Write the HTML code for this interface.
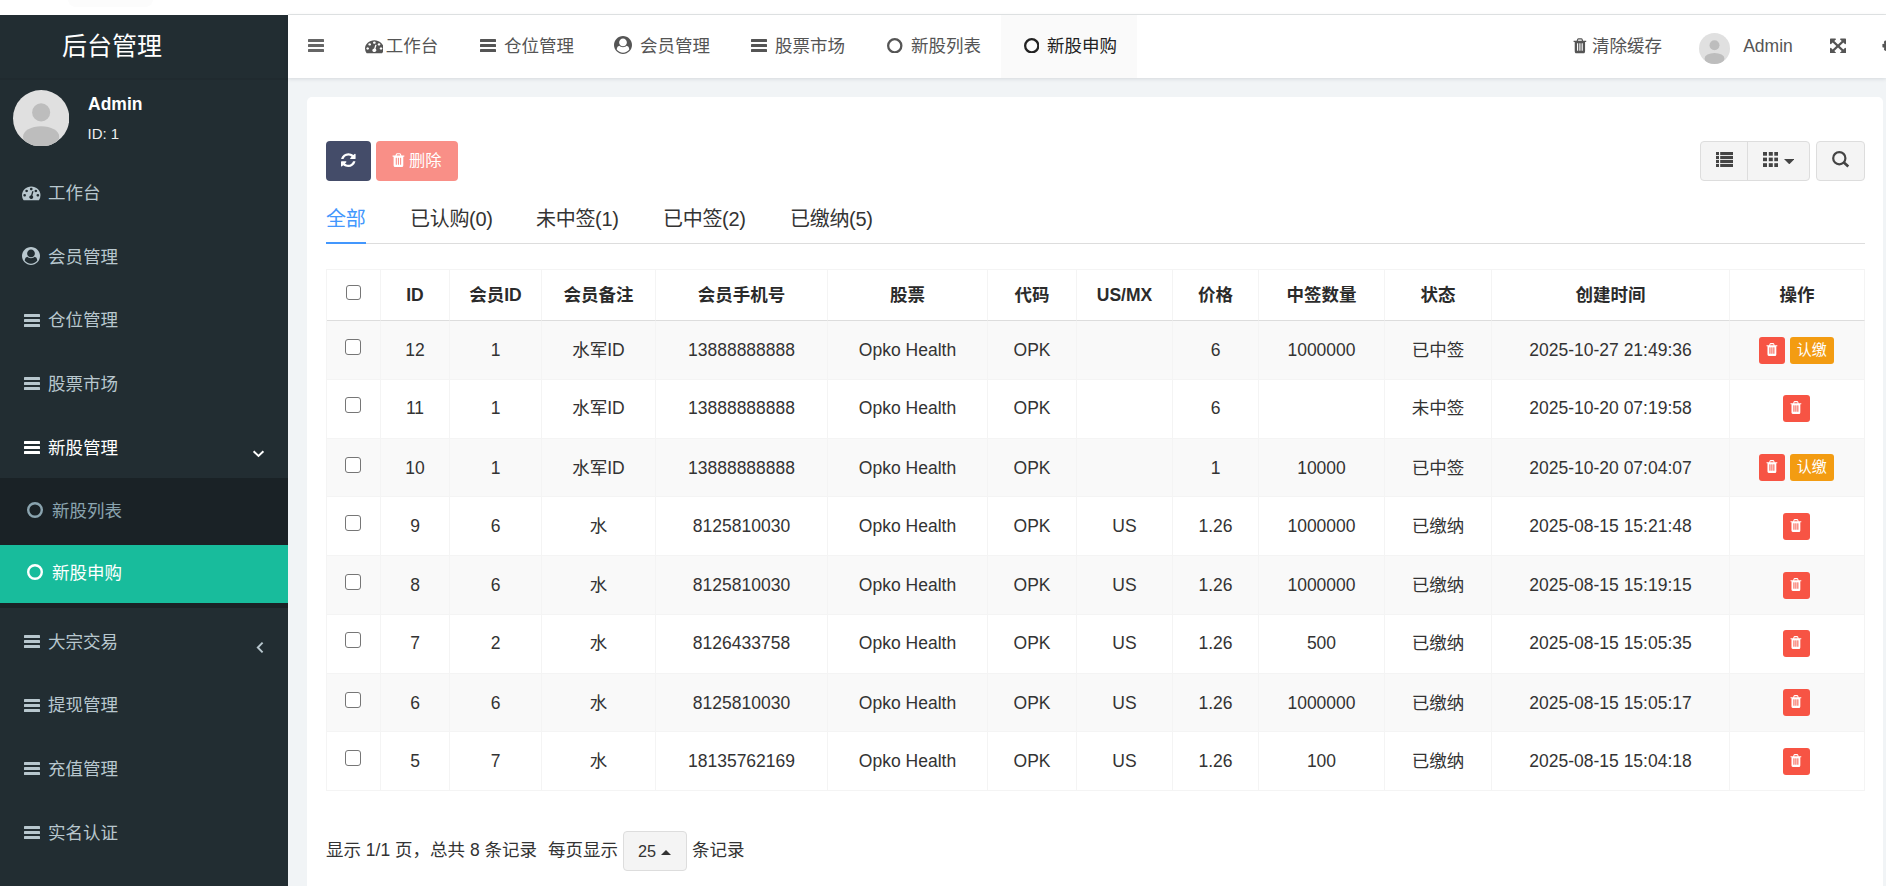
<!DOCTYPE html>
<html lang="zh-CN">
<head>
<meta charset="utf-8">
<title>后台管理</title>
<style>
*{box-sizing:border-box;margin:0;padding:0}
html,body{width:1886px;height:886px;overflow:hidden;background:#fff}
body{font-family:"Liberation Sans","Noto Sans CJK SC",sans-serif;font-size:17.5px;color:#333;position:relative}
.abs{position:absolute}
svg{display:block}
/* top strip */
#topline{position:absolute;left:288px;top:14px;width:1598px;height:1px;background:#e4e7e7}
/* sidebar */
#side{position:absolute;left:0;top:15px;width:288px;height:871px;background:#222d32;color:#b8c7ce}
#logo{position:absolute;left:62px;top:0;height:63px;line-height:62px;font-size:25px;color:#fff;white-space:nowrap}
#uname{position:absolute;left:88px;top:79px;font-size:17.5px;font-weight:bold;color:#fff;line-height:20px}
#uid{position:absolute;left:87.5px;top:109.5px;font-size:15px;color:#eee;line-height:18px}
.mi{position:absolute;left:0;width:288px;height:63.75px;line-height:63.75px;font-size:17.5px;color:#b8c7ce;white-space:nowrap}
.mi .ic{position:absolute;left:22px;top:0}
.mi .tx{position:absolute;left:48px;top:1px}
.mi.on{color:#fff}
#sub{position:absolute;left:0;top:463px;width:288px;height:130px;background:#1a2226}
.si{position:absolute;left:0;width:288px;height:58px;line-height:58px;font-size:17.5px;color:#8aa4af;white-space:nowrap}
.si .tx{position:absolute;left:52px;top:1px}
.si.on .tx{top:-1px}
.si.on{background:#18bc9c;color:#fff}
/* header */
#head{position:absolute;left:288px;top:15px;width:1598px;height:63px;background:#fff;box-shadow:0 1px 4px rgba(0,21,41,.12)}
.nt{position:absolute;top:0;height:63px;line-height:62px;font-size:17.5px;color:#555;white-space:nowrap}
.nt.on{background:#fafafa;color:#222}
/* content */
#main{position:absolute;left:288px;top:78px;width:1598px;height:808px;background:#f1f4f6}
#card{position:absolute;left:19px;top:19px;width:1576px;height:800px;background:#fff;border-radius:5px 5px 0 0}
.btn{position:absolute;border-radius:4px;white-space:nowrap}
#tabs{position:absolute;left:19px;top:146px;width:1539px;height:1px;background:#ddd}
.tab{position:absolute;top:-39px;letter-spacing:-.3px;font-size:20px;line-height:30px;color:#333;white-space:nowrap}
.tab.on{color:#4397fd}
#tabline{position:absolute;left:0;top:-1px;width:40px;height:2px;background:#4397fd}
table{position:absolute;left:19px;top:172px;border-collapse:separate;border-spacing:0;table-layout:fixed;width:1539px;border-left:1px solid #f4f4f4;border-top:1px solid #f4f4f4}
td,th{border-right:1px solid #f4f4f4;border-bottom:1px solid #f4f4f4;text-align:center;vertical-align:middle;font-size:17.5px;line-height:20px;color:#333;white-space:nowrap;padding:0;overflow:hidden}
th{height:51px;font-weight:bold;border-bottom:1px solid #ddd;color:#2b2b2b}
td{height:59px}
tr.s td{height:58px}
tr.u td{padding-bottom:2px}
td:last-child{padding-right:1.5px}
tbody tr:nth-child(odd) td{background:#f9f9f9}
.cb{display:inline-block;width:16px;height:16px;border:1.3px solid #767676;border-radius:3px;background:#fff;vertical-align:middle;position:relative;top:-4px;left:-1px}
th .cb{width:15px;height:15px;top:-3.5px;left:-.5px}
.del{display:inline-block;width:26.5px;height:27px;border-radius:3px;background:#f75444;vertical-align:middle;position:relative}
.pay{display:inline-block;width:44px;height:27px;border-radius:3px;background:#f39c12;color:#fff;font-size:15px;line-height:26px;vertical-align:middle;margin-left:4.5px}
.pgb{display:inline-block;width:63.5px;height:39.5px;margin:0 5.5px 0 5px;border:1px solid #ddd;border-radius:4px;background:#f4f4f4;font-size:16.25px;line-height:38px;vertical-align:middle;text-align:left;padding-left:14px;position:relative;top:-.5px}
.pgb i{display:inline-block;width:0;height:0;border-left:5px solid transparent;border-right:5px solid transparent;border-bottom:5px solid #333;margin-left:5px;position:relative;top:-2px}
#foot{position:absolute;left:19px;top:733px;height:40px;line-height:40px;font-size:17.5px;color:#333;white-space:nowrap}
</style>
</head>
<body>
<div id="topline"></div>
<div class="abs" style="left:68px;top:-10px;width:85px;height:16.5px;border-radius:8px;background:#fcfcfc"></div>

<div id="side">
  <div id="logo">后台管理</div>
  <div class="abs" style="left:0;top:63px;width:288px;height:2px;background:rgba(0,0,0,.06)"></div>
  <svg class="abs" style="left:12.9px;top:74.5px" width="56.3" height="56.3" viewBox="0 0 56 56"><circle cx="28" cy="28" r="28" fill="#e0e0e0"/><clipPath id="avc"><circle cx="28" cy="28" r="28"/></clipPath><g clip-path="url(#avc)" fill="#bdbdbd"><circle cx="28" cy="22.3" r="9"/><ellipse cx="28" cy="46.4" rx="18" ry="10.4"/></g></svg>
  <div id="uname">Admin</div>
  <div id="uid">ID: 1</div>

  <div class="mi" style="top:145.7px"><svg class="abs" style="left:22px;top:23.6px" width="18.5" height="17.5" viewBox="0 0 1792 1792" preserveAspectRatio="none"><path fill="#b8c7ce" fill-rule="evenodd" d="M384 1152q0-53-37.500-90.500t-90.500-37.500-90.500 37.500-37.500 90.500 37.500 90.500 90.500 37.500 90.500-37.500 37.500-90.500zM576 704q0-53-37.500-90.500t-90.500-37.500-90.500 37.500-37.500 90.500 37.500 90.500 90.500 37.500 90.500-37.500 37.500-90.500zM1004 1185l101-382q6-26-7.500-48.500t-38.500-29.500-48 6.500-30 39.500l-101 382q-60 5-107 43.500t-63 98.500q-20 77 20 146t117 89 146-20 89-117q16-60-6-117t-72-91zM1664 1152q0-53-37.500-90.500t-90.500-37.500-90.500 37.500-37.500 90.500 37.500 90.500 90.500 37.500 90.500-37.500 37.500-90.500zM1024 512q0-53-37.500-90.500t-90.500-37.500-90.500 37.500-37.500 90.500 37.500 90.500 90.500 37.500 90.500-37.500 37.500-90.500zM1472 704q0-53-37.500-90.500t-90.500-37.500-90.500 37.500-37.500 90.500 37.500 90.500 90.500 37.500 90.500-37.500 37.500-90.500zM1792 1152q0 261-141 483-19 29-54 29h-1402q-35 0-54-29-141-221-141-483 0-182 71-348t191-286 286-191 348-71 348 71 286 191 191 286 71 348z"/></svg><span class="tx">工作台</span></div>
  <div class="mi" style="top:209.5px"><svg class="abs" style="left:22.3px;top:22.7px" width="18" height="18" viewBox="0 0 1792 1792" preserveAspectRatio="none"><path fill="#b8c7ce" fill-rule="evenodd" d="M1523 1339q-22-155-87.500-257.500t-184.500-118.500q-67 74-159.500 115.500t-195.500 41.500-195.500-41.500-159.500-115.500q-119 16-184.500 118.500t-87.500 257.500q106 150 271 237.500t356 87.500 356-87.500 271-237.500zM1280 640q0-159-112.500-271.500t-271.500-112.500-271.500 112.500-112.500 271.500 112.500 271.500 271.500 112.500 271.500-112.500 112.500-271.500zM1792 896q0 182-71 347.500t-190.500 286-285.500 191.500-349 71q-182 0-348-71t-286-191-191-286-71-348 71-348 191-286 286-191 348-71 348 71 286 191 191 286 71 348z"/></svg><span class="tx">会员管理</span></div>
  <div class="mi" style="top:273.2px"><svg class="abs" style="left:23.5px;top:25.4px" width="16" height="13" viewBox="0 0 16 13"><g fill="#b8c7ce"><rect x="0" y="0" width="16" height="3" rx=".6"/><rect x="0" y="5" width="16" height="3" rx=".6"/><rect x="0" y="10" width="16" height="3" rx=".6"/></g></svg><span class="tx">仓位管理</span></div>
  <div class="mi" style="top:337px"><svg class="abs" style="left:23.5px;top:25.4px" width="16" height="13" viewBox="0 0 16 13"><g fill="#b8c7ce"><rect x="0" y="0" width="16" height="3" rx=".6"/><rect x="0" y="5" width="16" height="3" rx=".6"/><rect x="0" y="10" width="16" height="3" rx=".6"/></g></svg><span class="tx">股票市场</span></div>
  <div class="mi on" style="top:400.7px"><svg class="abs" style="left:23.5px;top:25.4px" width="16" height="13" viewBox="0 0 16 13"><g fill="#fff"><rect x="0" y="0" width="16" height="3" rx=".6"/><rect x="0" y="5" width="16" height="3" rx=".6"/><rect x="0" y="10" width="16" height="3" rx=".6"/></g></svg><span class="tx">新股管理</span><svg class="abs" style="left:252px;top:33px" width="13" height="10" viewBox="0 0 13 10"><path d="M1.6 2.2 L6.5 7 L11.4 2.2" fill="none" stroke="#fff" stroke-width="1.9"/></svg></div>
  <div id="sub">
    <div class="si" style="top:3.3px"><svg class="abs" style="left:27px;top:21px" width="16" height="16" viewBox="0 0 16 16"><circle cx="8.0" cy="8.0" r="6.8" fill="none" stroke="#8aa4af" stroke-width="2.4"/></svg><span class="tx">新股列表</span></div>
    <div class="si on" style="top:67px"><svg class="abs" style="left:27px;top:18.6px" width="16" height="16" viewBox="0 0 16 16"><circle cx="8.0" cy="8.0" r="6.8" fill="none" stroke="#fff" stroke-width="2.4"/></svg><span class="tx">新股申购</span></div>
  </div>
  <div class="mi" style="top:594.6px"><svg class="abs" style="left:23.5px;top:25.4px" width="16" height="13" viewBox="0 0 16 13"><g fill="#b8c7ce"><rect x="0" y="0" width="16" height="3" rx=".6"/><rect x="0" y="5" width="16" height="3" rx=".6"/><rect x="0" y="10" width="16" height="3" rx=".6"/></g></svg><span class="tx">大宗交易</span><svg class="abs" style="left:255px;top:31px" width="10" height="13" viewBox="0 0 10 13"><path d="M7.6 1.6 L2.8 6.5 L7.6 11.4" fill="none" stroke="#b8c7ce" stroke-width="1.9"/></svg></div>
  <div class="mi" style="top:658.3px"><svg class="abs" style="left:23.5px;top:25.4px" width="16" height="13" viewBox="0 0 16 13"><g fill="#b8c7ce"><rect x="0" y="0" width="16" height="3" rx=".6"/><rect x="0" y="5" width="16" height="3" rx=".6"/><rect x="0" y="10" width="16" height="3" rx=".6"/></g></svg><span class="tx">提现管理</span></div>
  <div class="mi" style="top:722.1px"><svg class="abs" style="left:23.5px;top:25.4px" width="16" height="13" viewBox="0 0 16 13"><g fill="#b8c7ce"><rect x="0" y="0" width="16" height="3" rx=".6"/><rect x="0" y="5" width="16" height="3" rx=".6"/><rect x="0" y="10" width="16" height="3" rx=".6"/></g></svg><span class="tx">充值管理</span></div>
  <div class="mi" style="top:785.8px"><svg class="abs" style="left:23.5px;top:25.4px" width="16" height="13" viewBox="0 0 16 13"><g fill="#b8c7ce"><rect x="0" y="0" width="16" height="3" rx=".6"/><rect x="0" y="5" width="16" height="3" rx=".6"/><rect x="0" y="10" width="16" height="3" rx=".6"/></g></svg><span class="tx">实名认证</span></div>
</div>

<div id="main">
  <div id="card">
    <div class="btn" style="left:19px;top:44px;width:45px;height:40px;background:#444c69"><svg class="abs" style="left:15.2px;top:11.3px" width="14.6" height="16.25" viewBox="128 0 1536 1792" preserveAspectRatio="none"><path fill="#fff" fill-rule="evenodd" d="M1639 1056q0 5-1 7-64 268-268 434.500t-478 166.500q-146 0-282.500-55t-243.500-157l-129 129q-19 19-45 19t-45-19-19-45v-448q0-26 19-45t45-19h448q26 0 45 19t19 45-19 45l-137 137q71 66 161 102t187 36q134 0 250-65t186-179q11-17 53-117 8-23 30-23h192q13 0 22.500 9.500t9.500 22.500zM1664 256v448q0 26-19 45t-45 19h-448q-26 0-45-19t-19-45 19-45l138-138q-148-137-349-137-134 0-250 65t-186 179q-11 17-53 117-8 23-30 23h-199q-13 0-22.500-9.500t-9.500-22.500v-7q65-268 270-434.500t480-166.500q146 0 284 55.500t245 156.500l130-129q19-19 45-19t45 19 19 45z"/></svg></div>
    <div class="btn" style="left:69px;top:44px;width:82px;height:40px;background:#f98f87;color:#fff;font-size:16.25px;line-height:39px;padding-left:33px"><svg class="abs" style="left:16.2px;top:11.2px" width="12.9" height="16.25" viewBox="128 0 1536 1792" preserveAspectRatio="none"><path fill="#fff" fill-rule="evenodd" d="M704 1376v-704q0-14-9-23t-23-9h-64q-14 0-23 9t-9 23v704q0 14 9 23t23 9h64q14 0 23-9t9-23zM960 1376v-704q0-14-9-23t-23-9h-64q-14 0-23 9t-9 23v704q0 14 9 23t23 9h64q14 0 23-9t9-23zM1216 1376v-704q0-14-9-23t-23-9h-64q-14 0-23 9t-9 23v704q0 14 9 23t23 9h64q14 0 23-9t9-23zM672 384h448l-48-117q-7-9-17-11h-317q-10 2-17 11zM1600 416v64q0 14-9 23t-23 9h-96v948q0 83-47 143.500t-113 60.500h-832q-66 0-113-58.500t-47-141.500v-952h-96q-14 0-23-9t-9-23v-64q0-14 9-23t23-9h309l70-167q15-37 54-63t79-26h320q40 0 79 26t54 63l70 167h309q14 0 23 9t9 23z"/></svg>删除</div>
    <div class="btn" style="left:1393px;top:44px;width:110px;height:40px;background:#f4f4f4;border:1px solid #ddd">
      <div class="abs" style="left:46px;top:0;width:1px;height:38px;background:#ddd"></div>
      <svg class="abs" style="left:15px;top:10px" width="17" height="15" viewBox="0 0 17 15"><g fill="#444"><rect x="0" y="0" width="3" height="3.1"/><rect x="4.2" y="0" width="12.8" height="3.1"/><rect x="0" y="4" width="3" height="3.1"/><rect x="4.2" y="4" width="12.8" height="3.1"/><rect x="0" y="8" width="3" height="3.1"/><rect x="4.2" y="8" width="12.8" height="3.1"/><rect x="0" y="12" width="3" height="3"/><rect x="4.2" y="12" width="12.8" height="3"/></g></svg>
      <svg class="abs" style="left:62px;top:10px" width="15.2" height="15" viewBox="0 0 15.2 15"><g fill="#444"><rect x="0" y="0" width="4" height="3.7"/><rect x="5.8" y="0" width="4" height="3.7"/><rect x="11.3" y="0" width="3.9" height="3.7"/><rect x="0" y="5.6" width="4" height="3.6"/><rect x="5.8" y="5.6" width="4" height="3.6"/><rect x="11.3" y="5.6" width="3.9" height="3.6"/><rect x="0" y="11.2" width="4" height="3.8"/><rect x="5.8" y="11.2" width="4" height="3.8"/><rect x="11.3" y="11.2" width="3.9" height="3.8"/></g></svg>
      <svg class="abs" style="left:82.7px;top:17px" width="10.6" height="5.3" viewBox="0 0 10 5"><path d="M0 0h10L5 5z" fill="#444"/></svg>
    </div>
    <div class="btn" style="left:1509px;top:44px;width:49px;height:40px;background:#f4f4f4;border:1px solid #ddd">
      <svg class="abs" style="left:15px;top:9px" width="18" height="17" viewBox="0 0 18 17"><circle cx="7.3" cy="7.2" r="6.1" fill="none" stroke="#444" stroke-width="2.2"/><path d="M11.6 11.3 L16.3 15.5" stroke="#444" stroke-width="2.7" stroke-linecap="butt" fill="none"/></svg>
    </div>

    <div id="tabs">
      <div id="tabline"></div>
      <div class="tab on" style="left:0">全部</div>
      <div class="tab" style="left:84px">已认购(0)</div>
      <div class="tab" style="left:210px">未中签(1)</div>
      <div class="tab" style="left:337px">已中签(2)</div>
      <div class="tab" style="left:464px">已缴纳(5)</div>
    </div>

    <table>
      <colgroup><col style="width:54px"><col style="width:69px"><col style="width:92px"><col style="width:114px"><col style="width:172px"><col style="width:160px"><col style="width:89px"><col style="width:96px"><col style="width:86px"><col style="width:126px"><col style="width:107px"><col style="width:238px"><col style="width:135px"></colgroup>
      <thead><tr><th><span class="cb"></span></th><th>ID</th><th>会员ID</th><th>会员备注</th><th>会员手机号</th><th>股票</th><th>代码</th><th>US/MX</th><th>价格</th><th>中签数量</th><th>状态</th><th>创建时间</th><th>操作</th></tr></thead>
      <tbody>
        <tr><td><span class="cb"></span></td><td>12</td><td>1</td><td>水军ID</td><td>13888888888</td><td>Opko Health</td><td>OPK</td><td></td><td>6</td><td>1000000</td><td>已中签</td><td>2025-10-27 21:49:36</td><td><span class="del"><svg class="abs" style="left:7.4px;top:5.2px" width="11.8" height="15" viewBox="128 0 1536 1792" preserveAspectRatio="none"><path fill="#fff" fill-rule="evenodd" d="M704 1376v-704q0-14-9-23t-23-9h-64q-14 0-23 9t-9 23v704q0 14 9 23t23 9h64q14 0 23-9t9-23zM960 1376v-704q0-14-9-23t-23-9h-64q-14 0-23 9t-9 23v704q0 14 9 23t23 9h64q14 0 23-9t9-23zM1216 1376v-704q0-14-9-23t-23-9h-64q-14 0-23 9t-9 23v704q0 14 9 23t23 9h64q14 0 23-9t9-23zM672 384h448l-48-117q-7-9-17-11h-317q-10 2-17 11zM1600 416v64q0 14-9 23t-23 9h-96v948q0 83-47 143.500t-113 60.500h-832q-66 0-113-58.500t-47-141.500v-952h-96q-14 0-23-9t-9-23v-64q0-14 9-23t23-9h309l70-167q15-37 54-63t79-26h320q40 0 79 26t54 63l70 167h309q14 0 23 9t9 23z"/></svg></span><span class="pay">认缴</span></td></tr>
        <tr class="u"><td><span class="cb"></span></td><td>11</td><td>1</td><td>水军ID</td><td>13888888888</td><td>Opko Health</td><td>OPK</td><td></td><td>6</td><td></td><td>未中签</td><td>2025-10-20 07:19:58</td><td><span class="del"><svg class="abs" style="left:7.4px;top:5.2px" width="11.8" height="15" viewBox="128 0 1536 1792" preserveAspectRatio="none"><path fill="#fff" fill-rule="evenodd" d="M704 1376v-704q0-14-9-23t-23-9h-64q-14 0-23 9t-9 23v704q0 14 9 23t23 9h64q14 0 23-9t9-23zM960 1376v-704q0-14-9-23t-23-9h-64q-14 0-23 9t-9 23v704q0 14 9 23t23 9h64q14 0 23-9t9-23zM1216 1376v-704q0-14-9-23t-23-9h-64q-14 0-23 9t-9 23v704q0 14 9 23t23 9h64q14 0 23-9t9-23zM672 384h448l-48-117q-7-9-17-11h-317q-10 2-17 11zM1600 416v64q0 14-9 23t-23 9h-96v948q0 83-47 143.500t-113 60.500h-832q-66 0-113-58.500t-47-141.500v-952h-96q-14 0-23-9t-9-23v-64q0-14 9-23t23-9h309l70-167q15-37 54-63t79-26h320q40 0 79 26t54 63l70 167h309q14 0 23 9t9 23z"/></svg></span></td></tr>
        <tr class="s"><td><span class="cb"></span></td><td>10</td><td>1</td><td>水军ID</td><td>13888888888</td><td>Opko Health</td><td>OPK</td><td></td><td>1</td><td>10000</td><td>已中签</td><td>2025-10-20 07:04:07</td><td><span class="del"><svg class="abs" style="left:7.4px;top:5.2px" width="11.8" height="15" viewBox="128 0 1536 1792" preserveAspectRatio="none"><path fill="#fff" fill-rule="evenodd" d="M704 1376v-704q0-14-9-23t-23-9h-64q-14 0-23 9t-9 23v704q0 14 9 23t23 9h64q14 0 23-9t9-23zM960 1376v-704q0-14-9-23t-23-9h-64q-14 0-23 9t-9 23v704q0 14 9 23t23 9h64q14 0 23-9t9-23zM1216 1376v-704q0-14-9-23t-23-9h-64q-14 0-23 9t-9 23v704q0 14 9 23t23 9h64q14 0 23-9t9-23zM672 384h448l-48-117q-7-9-17-11h-317q-10 2-17 11zM1600 416v64q0 14-9 23t-23 9h-96v948q0 83-47 143.500t-113 60.500h-832q-66 0-113-58.500t-47-141.500v-952h-96q-14 0-23-9t-9-23v-64q0-14 9-23t23-9h309l70-167q15-37 54-63t79-26h320q40 0 79 26t54 63l70 167h309q14 0 23 9t9 23z"/></svg></span><span class="pay">认缴</span></td></tr>
        <tr><td><span class="cb"></span></td><td>9</td><td>6</td><td>水</td><td>8125810030</td><td>Opko Health</td><td>OPK</td><td>US</td><td>1.26</td><td>1000000</td><td>已缴纳</td><td>2025-08-15 15:21:48</td><td><span class="del"><svg class="abs" style="left:7.4px;top:5.2px" width="11.8" height="15" viewBox="128 0 1536 1792" preserveAspectRatio="none"><path fill="#fff" fill-rule="evenodd" d="M704 1376v-704q0-14-9-23t-23-9h-64q-14 0-23 9t-9 23v704q0 14 9 23t23 9h64q14 0 23-9t9-23zM960 1376v-704q0-14-9-23t-23-9h-64q-14 0-23 9t-9 23v704q0 14 9 23t23 9h64q14 0 23-9t9-23zM1216 1376v-704q0-14-9-23t-23-9h-64q-14 0-23 9t-9 23v704q0 14 9 23t23 9h64q14 0 23-9t9-23zM672 384h448l-48-117q-7-9-17-11h-317q-10 2-17 11zM1600 416v64q0 14-9 23t-23 9h-96v948q0 83-47 143.500t-113 60.500h-832q-66 0-113-58.500t-47-141.500v-952h-96q-14 0-23-9t-9-23v-64q0-14 9-23t23-9h309l70-167q15-37 54-63t79-26h320q40 0 79 26t54 63l70 167h309q14 0 23 9t9 23z"/></svg></span></td></tr>
        <tr><td><span class="cb"></span></td><td>8</td><td>6</td><td>水</td><td>8125810030</td><td>Opko Health</td><td>OPK</td><td>US</td><td>1.26</td><td>1000000</td><td>已缴纳</td><td>2025-08-15 15:19:15</td><td><span class="del"><svg class="abs" style="left:7.4px;top:5.2px" width="11.8" height="15" viewBox="128 0 1536 1792" preserveAspectRatio="none"><path fill="#fff" fill-rule="evenodd" d="M704 1376v-704q0-14-9-23t-23-9h-64q-14 0-23 9t-9 23v704q0 14 9 23t23 9h64q14 0 23-9t9-23zM960 1376v-704q0-14-9-23t-23-9h-64q-14 0-23 9t-9 23v704q0 14 9 23t23 9h64q14 0 23-9t9-23zM1216 1376v-704q0-14-9-23t-23-9h-64q-14 0-23 9t-9 23v704q0 14 9 23t23 9h64q14 0 23-9t9-23zM672 384h448l-48-117q-7-9-17-11h-317q-10 2-17 11zM1600 416v64q0 14-9 23t-23 9h-96v948q0 83-47 143.500t-113 60.500h-832q-66 0-113-58.500t-47-141.500v-952h-96q-14 0-23-9t-9-23v-64q0-14 9-23t23-9h309l70-167q15-37 54-63t79-26h320q40 0 79 26t54 63l70 167h309q14 0 23 9t9 23z"/></svg></span></td></tr>
        <tr class="u"><td><span class="cb"></span></td><td>7</td><td>2</td><td>水</td><td>8126433758</td><td>Opko Health</td><td>OPK</td><td>US</td><td>1.26</td><td>500</td><td>已缴纳</td><td>2025-08-15 15:05:35</td><td><span class="del"><svg class="abs" style="left:7.4px;top:5.2px" width="11.8" height="15" viewBox="128 0 1536 1792" preserveAspectRatio="none"><path fill="#fff" fill-rule="evenodd" d="M704 1376v-704q0-14-9-23t-23-9h-64q-14 0-23 9t-9 23v704q0 14 9 23t23 9h64q14 0 23-9t9-23zM960 1376v-704q0-14-9-23t-23-9h-64q-14 0-23 9t-9 23v704q0 14 9 23t23 9h64q14 0 23-9t9-23zM1216 1376v-704q0-14-9-23t-23-9h-64q-14 0-23 9t-9 23v704q0 14 9 23t23 9h64q14 0 23-9t9-23zM672 384h448l-48-117q-7-9-17-11h-317q-10 2-17 11zM1600 416v64q0 14-9 23t-23 9h-96v948q0 83-47 143.500t-113 60.500h-832q-66 0-113-58.500t-47-141.500v-952h-96q-14 0-23-9t-9-23v-64q0-14 9-23t23-9h309l70-167q15-37 54-63t79-26h320q40 0 79 26t54 63l70 167h309q14 0 23 9t9 23z"/></svg></span></td></tr>
        <tr class="s"><td><span class="cb"></span></td><td>6</td><td>6</td><td>水</td><td>8125810030</td><td>Opko Health</td><td>OPK</td><td>US</td><td>1.26</td><td>1000000</td><td>已缴纳</td><td>2025-08-15 15:05:17</td><td><span class="del"><svg class="abs" style="left:7.4px;top:5.2px" width="11.8" height="15" viewBox="128 0 1536 1792" preserveAspectRatio="none"><path fill="#fff" fill-rule="evenodd" d="M704 1376v-704q0-14-9-23t-23-9h-64q-14 0-23 9t-9 23v704q0 14 9 23t23 9h64q14 0 23-9t9-23zM960 1376v-704q0-14-9-23t-23-9h-64q-14 0-23 9t-9 23v704q0 14 9 23t23 9h64q14 0 23-9t9-23zM1216 1376v-704q0-14-9-23t-23-9h-64q-14 0-23 9t-9 23v704q0 14 9 23t23 9h64q14 0 23-9t9-23zM672 384h448l-48-117q-7-9-17-11h-317q-10 2-17 11zM1600 416v64q0 14-9 23t-23 9h-96v948q0 83-47 143.500t-113 60.500h-832q-66 0-113-58.500t-47-141.500v-952h-96q-14 0-23-9t-9-23v-64q0-14 9-23t23-9h309l70-167q15-37 54-63t79-26h320q40 0 79 26t54 63l70 167h309q14 0 23 9t9 23z"/></svg></span></td></tr>
        <tr><td><span class="cb"></span></td><td>5</td><td>7</td><td>水</td><td>18135762169</td><td>Opko Health</td><td>OPK</td><td>US</td><td>1.26</td><td>100</td><td>已缴纳</td><td>2025-08-15 15:04:18</td><td><span class="del"><svg class="abs" style="left:7.4px;top:5.2px" width="11.8" height="15" viewBox="128 0 1536 1792" preserveAspectRatio="none"><path fill="#fff" fill-rule="evenodd" d="M704 1376v-704q0-14-9-23t-23-9h-64q-14 0-23 9t-9 23v704q0 14 9 23t23 9h64q14 0 23-9t9-23zM960 1376v-704q0-14-9-23t-23-9h-64q-14 0-23 9t-9 23v704q0 14 9 23t23 9h64q14 0 23-9t9-23zM1216 1376v-704q0-14-9-23t-23-9h-64q-14 0-23 9t-9 23v704q0 14 9 23t23 9h64q14 0 23-9t9-23zM672 384h448l-48-117q-7-9-17-11h-317q-10 2-17 11zM1600 416v64q0 14-9 23t-23 9h-96v948q0 83-47 143.500t-113 60.500h-832q-66 0-113-58.500t-47-141.500v-952h-96q-14 0-23-9t-9-23v-64q0-14 9-23t23-9h309l70-167q15-37 54-63t79-26h320q40 0 79 26t54 63l70 167h309q14 0 23 9t9 23z"/></svg></span></td></tr>
      </tbody>
    </table>

    <div id="foot">显示 1/1 页，总共 8 条记录<span style="margin-left:11px">每页显示</span><span class="pgb">25<i></i></span>条记录</div>
  </div>
</div>

<div id="head">
  <svg class="abs" style="left:20px;top:24px" width="16" height="13" viewBox="0 0 16 13"><g fill="#666"><rect x="0" y="0" width="16" height="3" rx=".6"/><rect x="0" y="5" width="16" height="3" rx=".6"/><rect x="0" y="10" width="16" height="3" rx=".6"/></g></svg>
  <svg class="abs" style="left:76.5px;top:22.8px" width="18.7" height="16.4" viewBox="0 0 1792 1792" preserveAspectRatio="none"><path fill="#555" fill-rule="evenodd" d="M384 1152q0-53-37.500-90.500t-90.500-37.500-90.500 37.500-37.500 90.500 37.500 90.500 90.500 37.500 90.500-37.500 37.500-90.500zM576 704q0-53-37.500-90.500t-90.500-37.500-90.500 37.500-37.500 90.500 37.500 90.500 90.500 37.500 90.500-37.500 37.500-90.500zM1004 1185l101-382q6-26-7.500-48.500t-38.500-29.500-48 6.500-30 39.500l-101 382q-60 5-107 43.500t-63 98.500q-20 77 20 146t117 89 146-20 89-117q16-60-6-117t-72-91zM1664 1152q0-53-37.500-90.500t-90.500-37.500-90.500 37.500-37.500 90.500 37.500 90.500 90.500 37.500 90.500-37.500 37.500-90.500zM1024 512q0-53-37.500-90.500t-90.500-37.500-90.500 37.500-37.500 90.500 37.500 90.500 90.500 37.500 90.500-37.500 37.500-90.500zM1472 704q0-53-37.500-90.500t-90.500-37.500-90.500 37.500-37.500 90.500 37.500 90.500 90.500 37.500 90.500-37.500 37.500-90.500zM1792 1152q0 261-141 483-19 29-54 29h-1402q-35 0-54-29-141-221-141-483 0-182 71-348t191-286 286-191 348-71 348 71 286 191 191 286 71 348z"/></svg>
  <div class="nt" style="left:97.8px">工作台</div>
  <svg class="abs" style="left:191.6px;top:24px" width="16" height="13" viewBox="0 0 16 13"><g fill="#555"><rect x="0" y="0" width="16" height="3" rx=".6"/><rect x="0" y="5" width="16" height="3" rx=".6"/><rect x="0" y="10" width="16" height="3" rx=".6"/></g></svg>
  <div class="nt" style="left:216px">仓位管理</div>
  <svg class="abs" style="left:326.4px;top:21.2px" width="18" height="18" viewBox="0 0 1792 1792" preserveAspectRatio="none"><path fill="#555" fill-rule="evenodd" d="M1523 1339q-22-155-87.500-257.500t-184.500-118.500q-67 74-159.500 115.500t-195.500 41.500-195.500-41.500-159.500-115.500q-119 16-184.500 118.500t-87.500 257.500q106 150 271 237.500t356 87.500 356-87.500 271-237.500zM1280 640q0-159-112.500-271.500t-271.500-112.500-271.500 112.500-112.500 271.500 112.500 271.500 271.500 112.500 271.500-112.500 112.500-271.500zM1792 896q0 182-71 347.500t-190.500 286-285.500 191.500-349 71q-182 0-348-71t-286-191-191-286-71-348 71-348 191-286 286-191 348-71 348 71 286 191 191 286 71 348z"/></svg>
  <div class="nt" style="left:352px">会员管理</div>
  <svg class="abs" style="left:463px;top:24px" width="16" height="13" viewBox="0 0 16 13"><g fill="#555"><rect x="0" y="0" width="16" height="3" rx=".6"/><rect x="0" y="5" width="16" height="3" rx=".6"/><rect x="0" y="10" width="16" height="3" rx=".6"/></g></svg>
  <div class="nt" style="left:487px">股票市场</div>
  <svg class="abs" style="left:599.4px;top:22.6px" width="15.5" height="15.5" viewBox="0 0 15.5 15.5"><circle cx="7.75" cy="7.75" r="6.6" fill="none" stroke="#555" stroke-width="2.3"/></svg>
  <div class="nt" style="left:622.9px">新股列表</div>
  <div class="nt on" style="left:713px;width:136px"><svg class="abs" style="left:22.5px;top:22.6px" width="15.5" height="15.5" viewBox="0 0 15.5 15.5"><circle cx="7.75" cy="7.75" r="6.6" fill="none" stroke="#222" stroke-width="2.3"/></svg><span style="position:absolute;left:46px">新股申购</span></div>
  <svg class="abs" style="left:1285.4px;top:21.8px" width="13.8" height="17.5" viewBox="128 0 1536 1792" preserveAspectRatio="none"><path fill="#555" fill-rule="evenodd" d="M704 1376v-704q0-14-9-23t-23-9h-64q-14 0-23 9t-9 23v704q0 14 9 23t23 9h64q14 0 23-9t9-23zM960 1376v-704q0-14-9-23t-23-9h-64q-14 0-23 9t-9 23v704q0 14 9 23t23 9h64q14 0 23-9t9-23zM1216 1376v-704q0-14-9-23t-23-9h-64q-14 0-23 9t-9 23v704q0 14 9 23t23 9h64q14 0 23-9t9-23zM672 384h448l-48-117q-7-9-17-11h-317q-10 2-17 11zM1600 416v64q0 14-9 23t-23 9h-96v948q0 83-47 143.500t-113 60.500h-832q-66 0-113-58.500t-47-141.500v-952h-96q-14 0-23-9t-9-23v-64q0-14 9-23t23-9h309l70-167q15-37 54-63t79-26h320q40 0 79 26t54 63l70 167h309q14 0 23 9t9 23z"/></svg>
  <div class="nt" style="left:1304px">清除缓存</div>
  <svg class="abs" style="left:1411px;top:18px" width="31" height="31" viewBox="0 0 56 56"><circle cx="28" cy="28" r="28" fill="#e0e0e0"/><clipPath id="avc2"><circle cx="28" cy="28" r="28"/></clipPath><g clip-path="url(#avc2)" fill="#bdbdbd"><circle cx="28" cy="22.3" r="9"/><ellipse cx="28" cy="46.4" rx="18" ry="10.4"/></g></svg>
  <div class="nt" style="left:1455.2px">Admin</div>
  <svg class="abs" style="left:1542px;top:20.6px" width="16" height="17.5" viewBox="0 0 1536 1792" preserveAspectRatio="none"><path fill="#555" fill-rule="evenodd" d="M1283 669l-355 355 355 355 144-144q29-31 70-14 39 17 39 59v448q0 26-19 45t-45 19h-448q-42 0-59-40-17-39 14-69l144-144-355-355-355 355 144 144q31 30 14 69-17 40-59 40h-448q-26 0-45-19t-19-45v-448q0-42 40-59 39-17 69 14l144 144 355-355-355-355-144 144q-19 19-45 19-12 0-24-5-40-17-40-59v-448q0-26 19-45t45-19h448q42 0 59 40 17 39-14 69l-144 144 355 355 355-355-144-144q-31-30-14-69 17-40 59-40h448q26 0 45 19t19 45v448q0 42-39 59-13 5-25 5-26 0-45-19z"/></svg>
  <svg class="abs" style="left:1593.5px;top:24.6px" width="4.5" height="11.4" viewBox="0 0 4.5 11.4"><path d="M4.5 .3 L2.7 .8 L1.9 2 L2.3 3.7 L.4 4.1 L.4 7.3 L2.3 7.7 L1.9 9.4 L2.7 10.6 L4.5 11.1Z" fill="#555"/></svg>
</div>
</body>
</html>
